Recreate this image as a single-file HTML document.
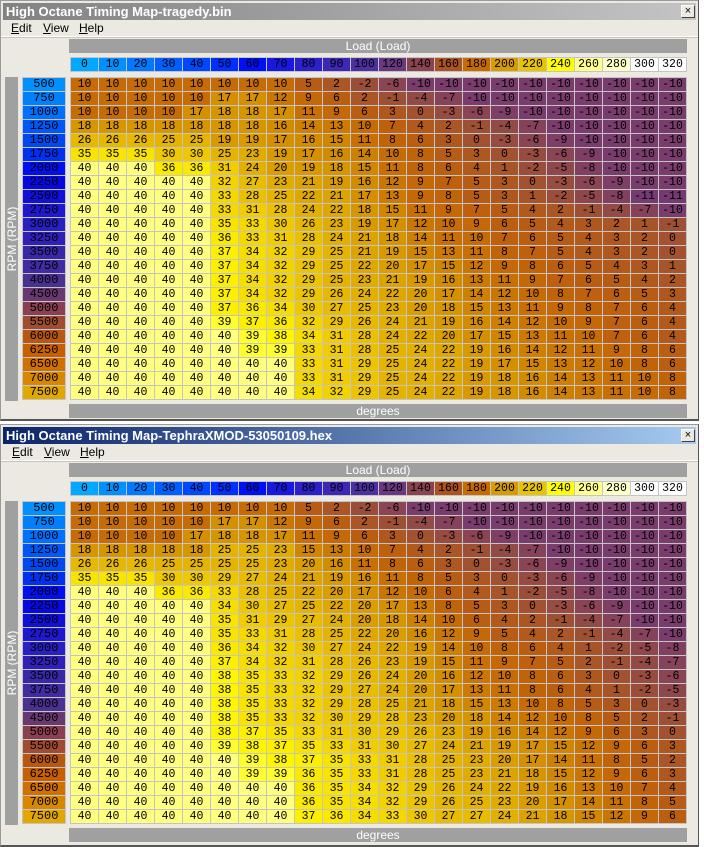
<!DOCTYPE html>
<html><head><meta charset="utf-8"><style>
*{margin:0;padding:0;box-sizing:border-box}
body{width:704px;height:847px;background:#fff;position:relative;overflow:hidden;font-family:"Liberation Sans",sans-serif}
.win{position:absolute;left:0;width:699px;height:421px;background:#ece9e2;border:1px solid #9a9a9a;border-right-color:#555;border-bottom:2px solid #555}
.tb{position:absolute;left:2px;top:2px;right:2px;height:17px;color:#fff;font-weight:bold;font-size:13px;line-height:17px;padding-left:3px}
.tb1{background:linear-gradient(90deg,#828282,#c4c4c4)}
.tb2{background:linear-gradient(90deg,#0a246a,#a6caf0)}
.x{position:absolute;right:1px;top:2px;width:14px;height:13px;background:#ece9e2;border:1px solid #404040;border-top-color:#fff;border-left-color:#fff;color:#000;font-size:11px;line-height:10px;text-align:center;font-weight:normal}
.menu{position:absolute;left:0;top:19px;right:0;height:17px;font-size:12px;line-height:17px;border-bottom:1px solid #fff;box-shadow:0 1px 0 #c8c4bc}
.menu span{position:absolute;top:0}
.bar{position:absolute;left:68px;width:618px;height:14px;background:#a0a0a0;color:#fff;font-size:12px;line-height:14px;text-align:center}
.grid{position:absolute;display:grid;gap:1px;background:#c4c4c4;padding:1px}
.hd{left:69px;top:56px;grid-template-columns:repeat(22,27px)}
.dt{left:69px;top:76px;grid-template-columns:repeat(22,27px)}
.rp{left:21px;top:76px;grid-template-columns:42px}
.grid i{font-style:normal;display:block;height:13px;font-family:"Liberation Mono",monospace;font-size:11.5px;line-height:13px;text-align:center;color:#000}
.rp i{font-size:12px}
.vb{position:absolute;left:4px;top:76px;width:13px;height:324px;background:#a0a0a0}
.vb span{position:absolute;left:50%;top:50%;transform:translate(-50%,-50%) rotate(-90deg);color:#fff;font-size:12px;white-space:nowrap}
.m11{background:#763a72}.m10{background:#7a3c6c}.m9{background:#7e3e66}.m8{background:#824060}.m7{background:#86425a}.m6{background:#8a4454}.m5{background:#8e484c}.m4{background:#924a46}.m3{background:#964c40}.m2{background:#9a4e3a}.m1{background:#9e5034}
.n0{background:#a25230}.n1{background:#a6542a}.n2{background:#aa5626}.n3{background:#ae5820}.n4{background:#b25a1c}.n5{background:#b65c16}.n6{background:#ba5e12}.n7{background:#be600e}.n8{background:#c0640a}.n9{background:#c46808}.n10{background:#c66c06}.n11{background:#c87004}.n12{background:#ca7604}.n13{background:#cc7a02}.n14{background:#ce8002}.n15{background:#d08600}.n16{background:#d28c00}.n17{background:#d49000}.n18{background:#d69600}.n19{background:#d89a00}.n20{background:#da9e00}.n21{background:#dca400}.n22{background:#dea800}.n23{background:#e0ac00}.n24{background:#e2b000}.n25{background:#e4b400}.n26{background:#e6b800}.n27{background:#e8bc00}.n28{background:#eac000}.n29{background:#ecc400}.n30{background:#eec800}.n31{background:#f0cc00}.n32{background:#f2d200}.n33{background:#f4d800}.n34{background:#f6de00}.n35{background:#f8e400}.n36{background:#faea00}.n37{background:#fcf000}.n38{background:#fef600}.n39{background:#ffff30}.n40{background:#ffff80}
</style></head><body>

<!-- WINDOW 1 -->
<div class="win" style="top:0">
<div class="tb tb1">High Octane Timing Map-tragedy.bin<div class="x">×</div></div>
<div class="menu"><span style="left:10px"><u>E</u>dit</span><span style="left:42px"><u>V</u>iew</span><span style="left:78px"><u>H</u>elp</span></div>
<div class="bar" style="top:38px">Load (Load)</div>
<div class="grid hd">
<i style="background:#00a8ff">0</i><i style="background:#0090ff">10</i><i style="background:#0078ff">20</i><i style="background:#0060ff">30</i><i style="background:#0048ff">40</i><i style="background:#0030ff">50</i><i style="background:#0010f4">60</i><i style="background:#1818e0">70</i><i style="background:#2c20c8">80</i><i style="background:#3c28b4">90</i><i style="background:#4c30a0">100</i><i style="background:#6a3880">120</i><i style="background:#8a4450">140</i><i style="background:#aa5220">160</i><i style="background:#c86c00">180</i><i style="background:#d89c00">200</i><i style="background:#e8c400">220</i><i style="background:#ffff00">240</i><i style="background:#ffff90">260</i><i style="background:#ffffc8">280</i><i style="background:#fff">300</i><i style="background:#fff">320</i>
</div>
<div class="vb"><span>RPM (RPM)</span></div>
<div class="grid rp">
<i style="background:#0090ff">500</i><i style="background:#0080ff">750</i><i style="background:#0070ff">1000</i><i style="background:#0058f8">1250</i><i style="background:#0048f0">1500</i><i style="background:#0030f0">1750</i><i style="background:#0010f0">2000</i><i style="background:#0808e0">2250</i><i style="background:#1010d8">2500</i><i style="background:#2018d0">2750</i><i style="background:#2820c0">3000</i><i style="background:#3020b8">3250</i><i style="background:#3828a8">3500</i><i style="background:#402ca0">3750</i><i style="background:#4a3090">4000</i><i style="background:#6a3870">4500</i><i style="background:#8a4050">5000</i><i style="background:#a04c30">5500</i><i style="background:#b85810">6000</i><i style="background:#c86000">6250</i><i style="background:#d07000">6500</i><i style="background:#d88800">7000</i><i style="background:#e0a800">7500</i>
</div>
<div class="grid dt">
<i class=n10>10</i><i class=n10>10</i><i class=n10>10</i><i class=n10>10</i><i class=n10>10</i><i class=n10>10</i><i class=n10>10</i><i class=n10>10</i><i class=n5>5</i><i class=n2>2</i><i class=m2>-2</i><i class=m6>-6</i><i class=m10>-10</i><i class=m10>-10</i><i class=m10>-10</i><i class=m10>-10</i><i class=m10>-10</i><i class=m10>-10</i><i class=m10>-10</i><i class=m10>-10</i><i class=m10>-10</i><i class=m10>-10</i>
<i class=n10>10</i><i class=n10>10</i><i class=n10>10</i><i class=n10>10</i><i class=n10>10</i><i class=n17>17</i><i class=n17>17</i><i class=n12>12</i><i class=n9>9</i><i class=n6>6</i><i class=n2>2</i><i class=m1>-1</i><i class=m4>-4</i><i class=m7>-7</i><i class=m10>-10</i><i class=m10>-10</i><i class=m10>-10</i><i class=m10>-10</i><i class=m10>-10</i><i class=m10>-10</i><i class=m10>-10</i><i class=m10>-10</i>
<i class=n10>10</i><i class=n10>10</i><i class=n10>10</i><i class=n10>10</i><i class=n17>17</i><i class=n18>18</i><i class=n18>18</i><i class=n17>17</i><i class=n11>11</i><i class=n9>9</i><i class=n6>6</i><i class=n3>3</i><i class=n0>0</i><i class=m3>-3</i><i class=m6>-6</i><i class=m9>-9</i><i class=m10>-10</i><i class=m10>-10</i><i class=m10>-10</i><i class=m10>-10</i><i class=m10>-10</i><i class=m10>-10</i>
<i class=n18>18</i><i class=n18>18</i><i class=n18>18</i><i class=n18>18</i><i class=n18>18</i><i class=n18>18</i><i class=n18>18</i><i class=n16>16</i><i class=n14>14</i><i class=n13>13</i><i class=n10>10</i><i class=n7>7</i><i class=n4>4</i><i class=n2>2</i><i class=m1>-1</i><i class=m4>-4</i><i class=m7>-7</i><i class=m10>-10</i><i class=m10>-10</i><i class=m10>-10</i><i class=m10>-10</i><i class=m10>-10</i>
<i class=n26>26</i><i class=n26>26</i><i class=n26>26</i><i class=n25>25</i><i class=n25>25</i><i class=n19>19</i><i class=n19>19</i><i class=n17>17</i><i class=n16>16</i><i class=n15>15</i><i class=n11>11</i><i class=n8>8</i><i class=n6>6</i><i class=n3>3</i><i class=n0>0</i><i class=m3>-3</i><i class=m6>-6</i><i class=m9>-9</i><i class=m10>-10</i><i class=m10>-10</i><i class=m10>-10</i><i class=m10>-10</i>
<i class=n35>35</i><i class=n35>35</i><i class=n35>35</i><i class=n30>30</i><i class=n30>30</i><i class=n25>25</i><i class=n23>23</i><i class=n19>19</i><i class=n17>17</i><i class=n16>16</i><i class=n14>14</i><i class=n10>10</i><i class=n8>8</i><i class=n5>5</i><i class=n3>3</i><i class=n0>0</i><i class=m3>-3</i><i class=m6>-6</i><i class=m9>-9</i><i class=m10>-10</i><i class=m10>-10</i><i class=m10>-10</i>
<i class=n40>40</i><i class=n40>40</i><i class=n40>40</i><i class=n36>36</i><i class=n36>36</i><i class=n31>31</i><i class=n24>24</i><i class=n20>20</i><i class=n19>19</i><i class=n18>18</i><i class=n15>15</i><i class=n11>11</i><i class=n8>8</i><i class=n6>6</i><i class=n4>4</i><i class=n1>1</i><i class=m2>-2</i><i class=m5>-5</i><i class=m8>-8</i><i class=m10>-10</i><i class=m10>-10</i><i class=m10>-10</i>
<i class=n40>40</i><i class=n40>40</i><i class=n40>40</i><i class=n40>40</i><i class=n40>40</i><i class=n32>32</i><i class=n27>27</i><i class=n23>23</i><i class=n21>21</i><i class=n19>19</i><i class=n16>16</i><i class=n12>12</i><i class=n9>9</i><i class=n7>7</i><i class=n5>5</i><i class=n3>3</i><i class=n0>0</i><i class=m3>-3</i><i class=m6>-6</i><i class=m9>-9</i><i class=m10>-10</i><i class=m10>-10</i>
<i class=n40>40</i><i class=n40>40</i><i class=n40>40</i><i class=n40>40</i><i class=n40>40</i><i class=n33>33</i><i class=n28>28</i><i class=n25>25</i><i class=n22>22</i><i class=n21>21</i><i class=n17>17</i><i class=n13>13</i><i class=n9>9</i><i class=n8>8</i><i class=n5>5</i><i class=n3>3</i><i class=n1>1</i><i class=m2>-2</i><i class=m5>-5</i><i class=m8>-8</i><i class=m11>-11</i><i class=m11>-11</i>
<i class=n40>40</i><i class=n40>40</i><i class=n40>40</i><i class=n40>40</i><i class=n40>40</i><i class=n33>33</i><i class=n31>31</i><i class=n28>28</i><i class=n24>24</i><i class=n22>22</i><i class=n18>18</i><i class=n15>15</i><i class=n11>11</i><i class=n9>9</i><i class=n7>7</i><i class=n5>5</i><i class=n4>4</i><i class=n2>2</i><i class=m1>-1</i><i class=m4>-4</i><i class=m7>-7</i><i class=m10>-10</i>
<i class=n40>40</i><i class=n40>40</i><i class=n40>40</i><i class=n40>40</i><i class=n40>40</i><i class=n35>35</i><i class=n33>33</i><i class=n30>30</i><i class=n26>26</i><i class=n23>23</i><i class=n19>19</i><i class=n17>17</i><i class=n12>12</i><i class=n10>10</i><i class=n9>9</i><i class=n6>6</i><i class=n5>5</i><i class=n4>4</i><i class=n3>3</i><i class=n2>2</i><i class=n1>1</i><i class=m1>-1</i>
<i class=n40>40</i><i class=n40>40</i><i class=n40>40</i><i class=n40>40</i><i class=n40>40</i><i class=n36>36</i><i class=n33>33</i><i class=n31>31</i><i class=n28>28</i><i class=n24>24</i><i class=n21>21</i><i class=n18>18</i><i class=n14>14</i><i class=n11>11</i><i class=n10>10</i><i class=n7>7</i><i class=n6>6</i><i class=n5>5</i><i class=n4>4</i><i class=n3>3</i><i class=n2>2</i><i class=n0>0</i>
<i class=n40>40</i><i class=n40>40</i><i class=n40>40</i><i class=n40>40</i><i class=n40>40</i><i class=n37>37</i><i class=n34>34</i><i class=n32>32</i><i class=n29>29</i><i class=n25>25</i><i class=n21>21</i><i class=n19>19</i><i class=n15>15</i><i class=n13>13</i><i class=n11>11</i><i class=n8>8</i><i class=n7>7</i><i class=n5>5</i><i class=n4>4</i><i class=n3>3</i><i class=n2>2</i><i class=n0>0</i>
<i class=n40>40</i><i class=n40>40</i><i class=n40>40</i><i class=n40>40</i><i class=n40>40</i><i class=n37>37</i><i class=n34>34</i><i class=n32>32</i><i class=n29>29</i><i class=n25>25</i><i class=n22>22</i><i class=n20>20</i><i class=n17>17</i><i class=n15>15</i><i class=n12>12</i><i class=n9>9</i><i class=n8>8</i><i class=n6>6</i><i class=n5>5</i><i class=n4>4</i><i class=n3>3</i><i class=n1>1</i>
<i class=n40>40</i><i class=n40>40</i><i class=n40>40</i><i class=n40>40</i><i class=n40>40</i><i class=n37>37</i><i class=n34>34</i><i class=n32>32</i><i class=n29>29</i><i class=n25>25</i><i class=n23>23</i><i class=n21>21</i><i class=n19>19</i><i class=n16>16</i><i class=n13>13</i><i class=n11>11</i><i class=n9>9</i><i class=n7>7</i><i class=n6>6</i><i class=n5>5</i><i class=n4>4</i><i class=n2>2</i>
<i class=n40>40</i><i class=n40>40</i><i class=n40>40</i><i class=n40>40</i><i class=n40>40</i><i class=n37>37</i><i class=n34>34</i><i class=n32>32</i><i class=n29>29</i><i class=n26>26</i><i class=n24>24</i><i class=n22>22</i><i class=n20>20</i><i class=n17>17</i><i class=n14>14</i><i class=n12>12</i><i class=n10>10</i><i class=n8>8</i><i class=n7>7</i><i class=n6>6</i><i class=n5>5</i><i class=n3>3</i>
<i class=n40>40</i><i class=n40>40</i><i class=n40>40</i><i class=n40>40</i><i class=n40>40</i><i class=n37>37</i><i class=n36>36</i><i class=n34>34</i><i class=n30>30</i><i class=n27>27</i><i class=n25>25</i><i class=n23>23</i><i class=n20>20</i><i class=n18>18</i><i class=n15>15</i><i class=n13>13</i><i class=n11>11</i><i class=n9>9</i><i class=n8>8</i><i class=n7>7</i><i class=n6>6</i><i class=n4>4</i>
<i class=n40>40</i><i class=n40>40</i><i class=n40>40</i><i class=n40>40</i><i class=n40>40</i><i class=n39>39</i><i class=n37>37</i><i class=n36>36</i><i class=n32>32</i><i class=n29>29</i><i class=n26>26</i><i class=n24>24</i><i class=n21>21</i><i class=n19>19</i><i class=n16>16</i><i class=n14>14</i><i class=n12>12</i><i class=n10>10</i><i class=n9>9</i><i class=n7>7</i><i class=n6>6</i><i class=n4>4</i>
<i class=n40>40</i><i class=n40>40</i><i class=n40>40</i><i class=n40>40</i><i class=n40>40</i><i class=n40>40</i><i class=n39>39</i><i class=n38>38</i><i class=n34>34</i><i class=n31>31</i><i class=n28>28</i><i class=n24>24</i><i class=n22>22</i><i class=n20>20</i><i class=n17>17</i><i class=n15>15</i><i class=n13>13</i><i class=n11>11</i><i class=n10>10</i><i class=n7>7</i><i class=n6>6</i><i class=n4>4</i>
<i class=n40>40</i><i class=n40>40</i><i class=n40>40</i><i class=n40>40</i><i class=n40>40</i><i class=n40>40</i><i class=n39>39</i><i class=n39>39</i><i class=n33>33</i><i class=n31>31</i><i class=n28>28</i><i class=n25>25</i><i class=n24>24</i><i class=n22>22</i><i class=n19>19</i><i class=n16>16</i><i class=n14>14</i><i class=n12>12</i><i class=n11>11</i><i class=n9>9</i><i class=n8>8</i><i class=n6>6</i>
<i class=n40>40</i><i class=n40>40</i><i class=n40>40</i><i class=n40>40</i><i class=n40>40</i><i class=n40>40</i><i class=n40>40</i><i class=n40>40</i><i class=n33>33</i><i class=n31>31</i><i class=n29>29</i><i class=n25>25</i><i class=n24>24</i><i class=n22>22</i><i class=n19>19</i><i class=n17>17</i><i class=n15>15</i><i class=n13>13</i><i class=n12>12</i><i class=n10>10</i><i class=n8>8</i><i class=n6>6</i>
<i class=n40>40</i><i class=n40>40</i><i class=n40>40</i><i class=n40>40</i><i class=n40>40</i><i class=n40>40</i><i class=n40>40</i><i class=n40>40</i><i class=n33>33</i><i class=n31>31</i><i class=n29>29</i><i class=n25>25</i><i class=n24>24</i><i class=n22>22</i><i class=n19>19</i><i class=n18>18</i><i class=n16>16</i><i class=n14>14</i><i class=n13>13</i><i class=n11>11</i><i class=n10>10</i><i class=n8>8</i>
<i class=n40>40</i><i class=n40>40</i><i class=n40>40</i><i class=n40>40</i><i class=n40>40</i><i class=n40>40</i><i class=n40>40</i><i class=n40>40</i><i class=n34>34</i><i class=n32>32</i><i class=n29>29</i><i class=n25>25</i><i class=n24>24</i><i class=n22>22</i><i class=n19>19</i><i class=n18>18</i><i class=n16>16</i><i class=n14>14</i><i class=n13>13</i><i class=n11>11</i><i class=n10>10</i><i class=n8>8</i>
</div>
<div class="bar" style="top:403px">degrees</div>
</div>

<!-- WINDOW 2 -->
<div class="win" style="top:424px;height:423px">
<div class="tb tb2">High Octane Timing Map-TephraXMOD-53050109.hex<div class="x">×</div></div>
<div class="menu"><span style="left:11px"><u>E</u>dit</span><span style="left:43px"><u>V</u>iew</span><span style="left:79px"><u>H</u>elp</span></div>
<div class="bar" style="top:38px">Load (Load)</div>
<div class="grid hd">
<i style="background:#00a8ff">0</i><i style="background:#0090ff">10</i><i style="background:#0078ff">20</i><i style="background:#0060ff">30</i><i style="background:#0048ff">40</i><i style="background:#0030ff">50</i><i style="background:#0010f4">60</i><i style="background:#1818e0">70</i><i style="background:#2c20c8">80</i><i style="background:#3c28b4">90</i><i style="background:#4c30a0">100</i><i style="background:#6a3880">120</i><i style="background:#8a4450">140</i><i style="background:#aa5220">160</i><i style="background:#c86c00">180</i><i style="background:#d89c00">200</i><i style="background:#e8c400">220</i><i style="background:#ffff00">240</i><i style="background:#ffff90">260</i><i style="background:#ffffc8">280</i><i style="background:#fff">300</i><i style="background:#fff">320</i>
</div>
<div class="vb"><span>RPM (RPM)</span></div>
<div class="grid rp">
<i style="background:#0090ff">500</i><i style="background:#0080ff">750</i><i style="background:#0070ff">1000</i><i style="background:#0058f8">1250</i><i style="background:#0048f0">1500</i><i style="background:#0030f0">1750</i><i style="background:#0010f0">2000</i><i style="background:#0808e0">2250</i><i style="background:#1010d8">2500</i><i style="background:#2018d0">2750</i><i style="background:#2820c0">3000</i><i style="background:#3020b8">3250</i><i style="background:#3828a8">3500</i><i style="background:#402ca0">3750</i><i style="background:#4a3090">4000</i><i style="background:#6a3870">4500</i><i style="background:#8a4050">5000</i><i style="background:#a04c30">5500</i><i style="background:#b85810">6000</i><i style="background:#c86000">6250</i><i style="background:#d07000">6500</i><i style="background:#d88800">7000</i><i style="background:#e0a800">7500</i>
</div>
<div class="grid dt">
<i class=n10>10</i><i class=n10>10</i><i class=n10>10</i><i class=n10>10</i><i class=n10>10</i><i class=n10>10</i><i class=n10>10</i><i class=n10>10</i><i class=n5>5</i><i class=n2>2</i><i class=m2>-2</i><i class=m6>-6</i><i class=m10>-10</i><i class=m10>-10</i><i class=m10>-10</i><i class=m10>-10</i><i class=m10>-10</i><i class=m10>-10</i><i class=m10>-10</i><i class=m10>-10</i><i class=m10>-10</i><i class=m10>-10</i>
<i class=n10>10</i><i class=n10>10</i><i class=n10>10</i><i class=n10>10</i><i class=n10>10</i><i class=n17>17</i><i class=n17>17</i><i class=n12>12</i><i class=n9>9</i><i class=n6>6</i><i class=n2>2</i><i class=m1>-1</i><i class=m4>-4</i><i class=m7>-7</i><i class=m10>-10</i><i class=m10>-10</i><i class=m10>-10</i><i class=m10>-10</i><i class=m10>-10</i><i class=m10>-10</i><i class=m10>-10</i><i class=m10>-10</i>
<i class=n10>10</i><i class=n10>10</i><i class=n10>10</i><i class=n10>10</i><i class=n17>17</i><i class=n18>18</i><i class=n18>18</i><i class=n17>17</i><i class=n11>11</i><i class=n9>9</i><i class=n6>6</i><i class=n3>3</i><i class=n0>0</i><i class=m3>-3</i><i class=m6>-6</i><i class=m9>-9</i><i class=m10>-10</i><i class=m10>-10</i><i class=m10>-10</i><i class=m10>-10</i><i class=m10>-10</i><i class=m10>-10</i>
<i class=n18>18</i><i class=n18>18</i><i class=n18>18</i><i class=n18>18</i><i class=n18>18</i><i class=n25>25</i><i class=n25>25</i><i class=n23>23</i><i class=n15>15</i><i class=n13>13</i><i class=n10>10</i><i class=n7>7</i><i class=n4>4</i><i class=n2>2</i><i class=m1>-1</i><i class=m4>-4</i><i class=m7>-7</i><i class=m10>-10</i><i class=m10>-10</i><i class=m10>-10</i><i class=m10>-10</i><i class=m10>-10</i>
<i class=n26>26</i><i class=n26>26</i><i class=n26>26</i><i class=n25>25</i><i class=n25>25</i><i class=n25>25</i><i class=n25>25</i><i class=n23>23</i><i class=n20>20</i><i class=n16>16</i><i class=n11>11</i><i class=n8>8</i><i class=n6>6</i><i class=n3>3</i><i class=n0>0</i><i class=m3>-3</i><i class=m6>-6</i><i class=m9>-9</i><i class=m10>-10</i><i class=m10>-10</i><i class=m10>-10</i><i class=m10>-10</i>
<i class=n35>35</i><i class=n35>35</i><i class=n35>35</i><i class=n30>30</i><i class=n30>30</i><i class=n29>29</i><i class=n27>27</i><i class=n24>24</i><i class=n21>21</i><i class=n19>19</i><i class=n16>16</i><i class=n11>11</i><i class=n8>8</i><i class=n5>5</i><i class=n3>3</i><i class=n0>0</i><i class=m3>-3</i><i class=m6>-6</i><i class=m9>-9</i><i class=m10>-10</i><i class=m10>-10</i><i class=m10>-10</i>
<i class=n40>40</i><i class=n40>40</i><i class=n40>40</i><i class=n36>36</i><i class=n36>36</i><i class=n33>33</i><i class=n28>28</i><i class=n25>25</i><i class=n22>22</i><i class=n20>20</i><i class=n17>17</i><i class=n12>12</i><i class=n10>10</i><i class=n6>6</i><i class=n4>4</i><i class=n1>1</i><i class=m2>-2</i><i class=m5>-5</i><i class=m8>-8</i><i class=m10>-10</i><i class=m10>-10</i><i class=m10>-10</i>
<i class=n40>40</i><i class=n40>40</i><i class=n40>40</i><i class=n40>40</i><i class=n40>40</i><i class=n34>34</i><i class=n30>30</i><i class=n27>27</i><i class=n25>25</i><i class=n22>22</i><i class=n20>20</i><i class=n17>17</i><i class=n13>13</i><i class=n8>8</i><i class=n5>5</i><i class=n3>3</i><i class=n0>0</i><i class=m3>-3</i><i class=m6>-6</i><i class=m9>-9</i><i class=m10>-10</i><i class=m10>-10</i>
<i class=n40>40</i><i class=n40>40</i><i class=n40>40</i><i class=n40>40</i><i class=n40>40</i><i class=n35>35</i><i class=n31>31</i><i class=n29>29</i><i class=n27>27</i><i class=n24>24</i><i class=n20>20</i><i class=n18>18</i><i class=n14>14</i><i class=n10>10</i><i class=n6>6</i><i class=n4>4</i><i class=n2>2</i><i class=m1>-1</i><i class=m4>-4</i><i class=m7>-7</i><i class=m10>-10</i><i class=m10>-10</i>
<i class=n40>40</i><i class=n40>40</i><i class=n40>40</i><i class=n40>40</i><i class=n40>40</i><i class=n35>35</i><i class=n33>33</i><i class=n31>31</i><i class=n28>28</i><i class=n25>25</i><i class=n22>22</i><i class=n20>20</i><i class=n16>16</i><i class=n12>12</i><i class=n9>9</i><i class=n5>5</i><i class=n4>4</i><i class=n2>2</i><i class=m1>-1</i><i class=m4>-4</i><i class=m7>-7</i><i class=m10>-10</i>
<i class=n40>40</i><i class=n40>40</i><i class=n40>40</i><i class=n40>40</i><i class=n40>40</i><i class=n36>36</i><i class=n34>34</i><i class=n32>32</i><i class=n30>30</i><i class=n27>27</i><i class=n24>24</i><i class=n22>22</i><i class=n19>19</i><i class=n14>14</i><i class=n10>10</i><i class=n8>8</i><i class=n6>6</i><i class=n4>4</i><i class=n1>1</i><i class=m2>-2</i><i class=m5>-5</i><i class=m8>-8</i>
<i class=n40>40</i><i class=n40>40</i><i class=n40>40</i><i class=n40>40</i><i class=n40>40</i><i class=n37>37</i><i class=n34>34</i><i class=n32>32</i><i class=n31>31</i><i class=n28>28</i><i class=n26>26</i><i class=n23>23</i><i class=n19>19</i><i class=n15>15</i><i class=n11>11</i><i class=n9>9</i><i class=n7>7</i><i class=n5>5</i><i class=n2>2</i><i class=m1>-1</i><i class=m4>-4</i><i class=m7>-7</i>
<i class=n40>40</i><i class=n40>40</i><i class=n40>40</i><i class=n40>40</i><i class=n40>40</i><i class=n38>38</i><i class=n35>35</i><i class=n33>33</i><i class=n32>32</i><i class=n29>29</i><i class=n26>26</i><i class=n24>24</i><i class=n20>20</i><i class=n16>16</i><i class=n12>12</i><i class=n10>10</i><i class=n8>8</i><i class=n6>6</i><i class=n3>3</i><i class=n0>0</i><i class=m3>-3</i><i class=m6>-6</i>
<i class=n40>40</i><i class=n40>40</i><i class=n40>40</i><i class=n40>40</i><i class=n40>40</i><i class=n38>38</i><i class=n35>35</i><i class=n33>33</i><i class=n32>32</i><i class=n29>29</i><i class=n27>27</i><i class=n24>24</i><i class=n20>20</i><i class=n17>17</i><i class=n13>13</i><i class=n11>11</i><i class=n8>8</i><i class=n6>6</i><i class=n4>4</i><i class=n1>1</i><i class=m2>-2</i><i class=m5>-5</i>
<i class=n40>40</i><i class=n40>40</i><i class=n40>40</i><i class=n40>40</i><i class=n40>40</i><i class=n38>38</i><i class=n35>35</i><i class=n33>33</i><i class=n32>32</i><i class=n29>29</i><i class=n28>28</i><i class=n25>25</i><i class=n21>21</i><i class=n18>18</i><i class=n15>15</i><i class=n13>13</i><i class=n10>10</i><i class=n8>8</i><i class=n5>5</i><i class=n3>3</i><i class=n0>0</i><i class=m3>-3</i>
<i class=n40>40</i><i class=n40>40</i><i class=n40>40</i><i class=n40>40</i><i class=n40>40</i><i class=n38>38</i><i class=n35>35</i><i class=n33>33</i><i class=n32>32</i><i class=n30>30</i><i class=n29>29</i><i class=n28>28</i><i class=n23>23</i><i class=n20>20</i><i class=n18>18</i><i class=n14>14</i><i class=n12>12</i><i class=n10>10</i><i class=n8>8</i><i class=n5>5</i><i class=n2>2</i><i class=m1>-1</i>
<i class=n40>40</i><i class=n40>40</i><i class=n40>40</i><i class=n40>40</i><i class=n40>40</i><i class=n38>38</i><i class=n37>37</i><i class=n35>35</i><i class=n33>33</i><i class=n31>31</i><i class=n30>30</i><i class=n29>29</i><i class=n26>26</i><i class=n23>23</i><i class=n19>19</i><i class=n16>16</i><i class=n14>14</i><i class=n12>12</i><i class=n9>9</i><i class=n6>6</i><i class=n3>3</i><i class=n0>0</i>
<i class=n40>40</i><i class=n40>40</i><i class=n40>40</i><i class=n40>40</i><i class=n40>40</i><i class=n39>39</i><i class=n38>38</i><i class=n37>37</i><i class=n35>35</i><i class=n33>33</i><i class=n31>31</i><i class=n30>30</i><i class=n27>27</i><i class=n24>24</i><i class=n21>21</i><i class=n19>19</i><i class=n17>17</i><i class=n15>15</i><i class=n12>12</i><i class=n9>9</i><i class=n6>6</i><i class=n3>3</i>
<i class=n40>40</i><i class=n40>40</i><i class=n40>40</i><i class=n40>40</i><i class=n40>40</i><i class=n40>40</i><i class=n39>39</i><i class=n38>38</i><i class=n37>37</i><i class=n35>35</i><i class=n33>33</i><i class=n31>31</i><i class=n28>28</i><i class=n25>25</i><i class=n23>23</i><i class=n20>20</i><i class=n17>17</i><i class=n14>14</i><i class=n11>11</i><i class=n8>8</i><i class=n5>5</i><i class=n2>2</i>
<i class=n40>40</i><i class=n40>40</i><i class=n40>40</i><i class=n40>40</i><i class=n40>40</i><i class=n40>40</i><i class=n39>39</i><i class=n39>39</i><i class=n36>36</i><i class=n35>35</i><i class=n33>33</i><i class=n31>31</i><i class=n28>28</i><i class=n25>25</i><i class=n23>23</i><i class=n21>21</i><i class=n18>18</i><i class=n15>15</i><i class=n12>12</i><i class=n9>9</i><i class=n6>6</i><i class=n3>3</i>
<i class=n40>40</i><i class=n40>40</i><i class=n40>40</i><i class=n40>40</i><i class=n40>40</i><i class=n40>40</i><i class=n40>40</i><i class=n40>40</i><i class=n36>36</i><i class=n35>35</i><i class=n34>34</i><i class=n32>32</i><i class=n29>29</i><i class=n26>26</i><i class=n24>24</i><i class=n22>22</i><i class=n19>19</i><i class=n16>16</i><i class=n13>13</i><i class=n10>10</i><i class=n7>7</i><i class=n4>4</i>
<i class=n40>40</i><i class=n40>40</i><i class=n40>40</i><i class=n40>40</i><i class=n40>40</i><i class=n40>40</i><i class=n40>40</i><i class=n40>40</i><i class=n36>36</i><i class=n35>35</i><i class=n34>34</i><i class=n32>32</i><i class=n29>29</i><i class=n26>26</i><i class=n25>25</i><i class=n23>23</i><i class=n20>20</i><i class=n17>17</i><i class=n14>14</i><i class=n11>11</i><i class=n8>8</i><i class=n5>5</i>
<i class=n40>40</i><i class=n40>40</i><i class=n40>40</i><i class=n40>40</i><i class=n40>40</i><i class=n40>40</i><i class=n40>40</i><i class=n40>40</i><i class=n37>37</i><i class=n36>36</i><i class=n34>34</i><i class=n33>33</i><i class=n30>30</i><i class=n27>27</i><i class=n27>27</i><i class=n24>24</i><i class=n21>21</i><i class=n18>18</i><i class=n15>15</i><i class=n12>12</i><i class=n9>9</i><i class=n6>6</i>
</div>
<div class="bar" style="top:403px">degrees</div>
</div>
</body></html>
